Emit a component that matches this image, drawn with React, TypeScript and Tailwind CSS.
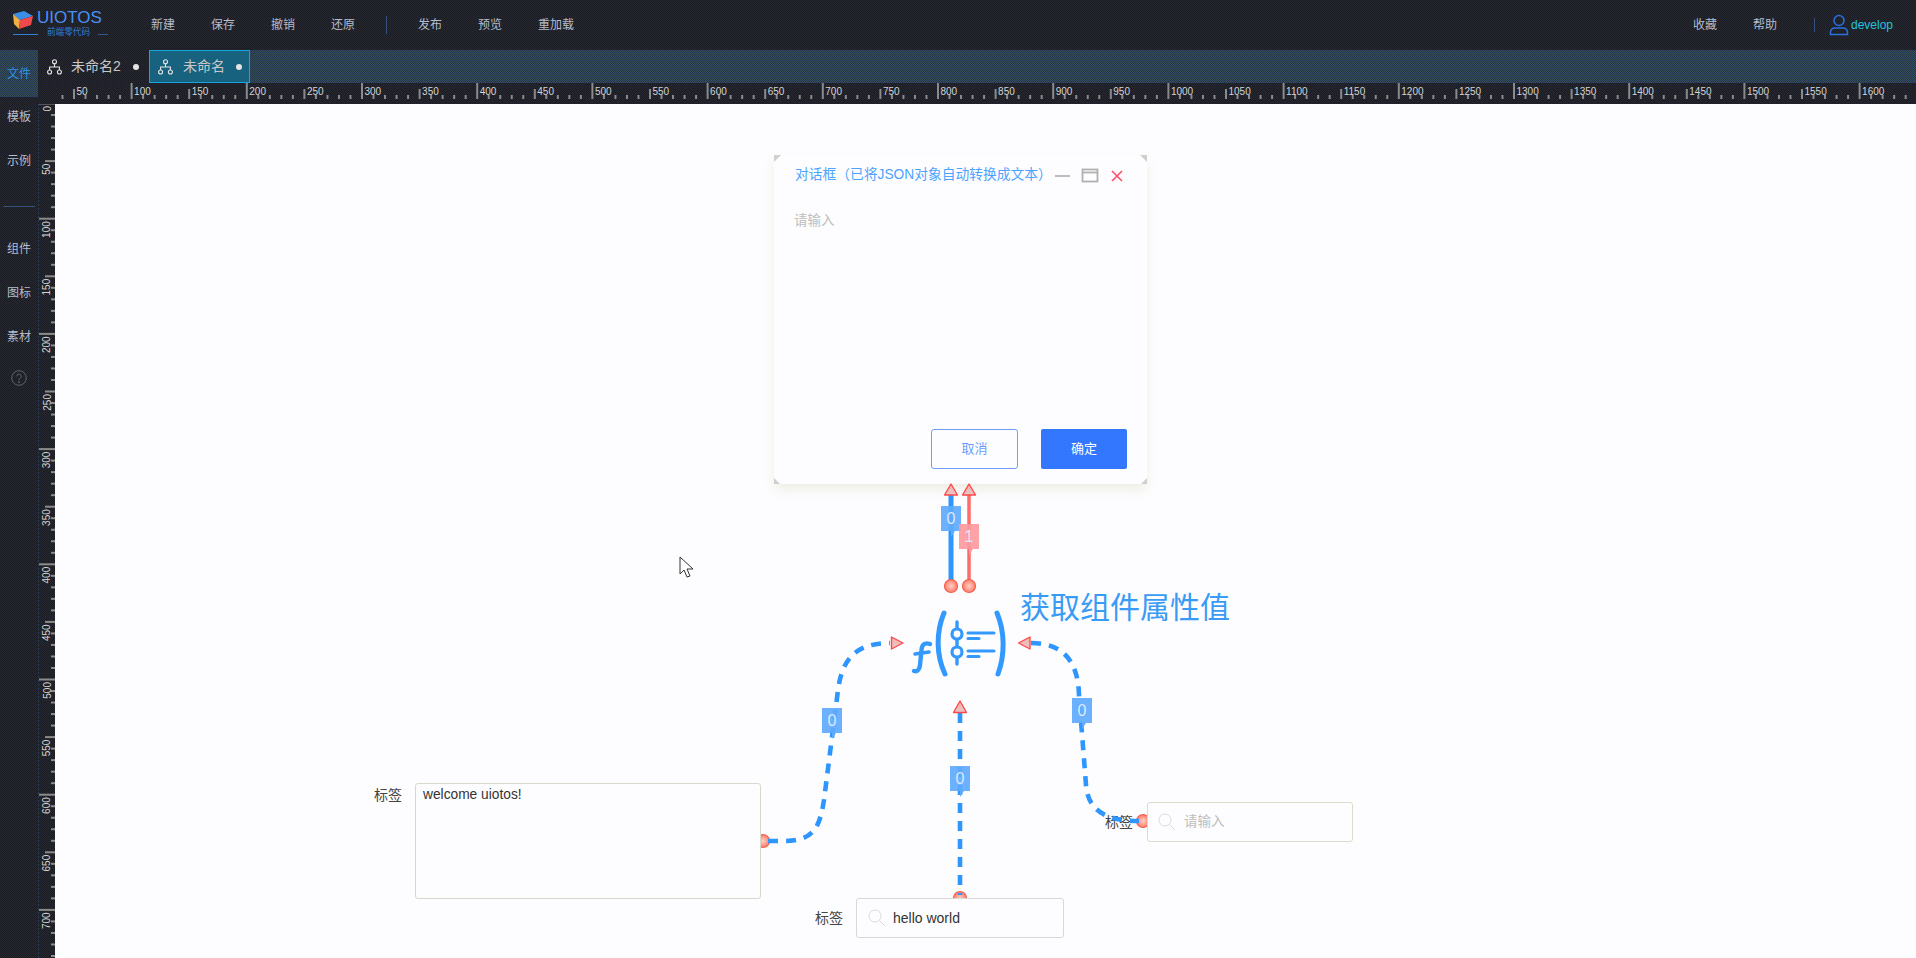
const cjk = "font-['Liberation_Sans','Noto_Sans_CJK_SC',sans-serif]";
// the reference is a dithered gif, so the dark panels carry a 1px checker
const darkBg = 'bg-[repeating-conic-gradient(#26272b_0_25%,#1b1d28_0_50%)] bg-[length:2px_2px]';
const tabBg = 'bg-[repeating-conic-gradient(#35504f_0_25%,#243454_0_50%)] bg-[length:2px_2px]';

function range(from: number, to: number, step: number) {
  const out: number[] = [];
  for (let n = from; n <= to; n += step) out.push(n);
  return out;
}

function Logo() {
  return (
    <div className="relative w-[151px] h-full shrink-0">
      <svg width="110" height="40" viewBox="0 0 110 40" className="absolute left-0 top-0">
        <polygon points="13,14 24,11 33,16 20,20" fill="#3a8ee8" />
        <polygon points="13,14 20,20 19,29 14,24" fill="#efb043" />
        <polygon points="20,20 33,16 31,25 19,29" fill="#f04a4a" />
        <line x1="13" y1="34.5" x2="38" y2="34.5" stroke="#2f7fd8" strokeWidth="1" />
        <line x1="98" y1="34.5" x2="108" y2="34.5" stroke="#2b5a96" strokeWidth="1" />
      </svg>
      <span className="absolute left-[37px] top-[8px] text-[17px] leading-[20px] text-[#4a8ff0]">UIOTOS</span>
      <span className="absolute left-[47px] top-[27px] text-[8.6px] leading-[11px] text-[#2f7fd8] whitespace-nowrap">前端零代码</span>
    </div>
  );
}

function Header() {
  return (
    <div className={`flex items-center h-[50px] shrink-0 ${darkBg} text-[12px] text-[#b4bccc]`}>
      <Logo />
      <div className="flex items-center gap-9">
        <span>新建</span>
        <span>保存</span>
        <span>撤销</span>
        <span>还原</span>
      </div>
      <div className="w-px h-[18px] bg-[#35507c] ml-[31px] mr-[31px]" />
      <div className="flex items-center gap-9">
        <span>发布</span>
        <span>预览</span>
        <span>重加载</span>
      </div>
      <div className="flex items-center ml-auto pr-[23px]">
        <span>收藏</span>
        <span className="ml-9">帮助</span>
        <div className="w-px h-[14px] bg-[#35507c] ml-[37px] mr-[14px]" />
        <svg width="20" height="22" viewBox="0 0 20 22" fill="none" stroke="#2b6fe0" strokeWidth="1.5">
          <circle cx="10" cy="6.5" r="5" />
          <path d="M1.5 20.5 v-2.5 a4.5 4.5 0 0 1 4.5 -4 h8 a4.5 4.5 0 0 1 4.5 4 v2.5 z" />
        </svg>
        <span className="ml-[2px] text-[#22c3dc]">develop</span>
      </div>
    </div>
  );
}

function SideItem({ label }: { label: string }) {
  return <div className="flex items-center justify-center h-[40px]">{label}</div>;
}

function Sidebar() {
  return (
    <div className={`flex flex-col w-[38px] shrink-0 ${darkBg} text-[12px] text-[#b4bccc]`}>
      <div className={`flex items-center justify-center h-[47px] ${tabBg} text-[#2e8fe6]`}>文件</div>
      <SideItem label="模板" />
      <div className="mt-[4px]">
        <SideItem label="示例" />
      </div>
      <div className="h-px mx-[3px] mt-[25px] bg-[#35507c]" />
      <div className="mt-[22px] flex flex-col gap-[4px]">
        <SideItem label="组件" />
        <SideItem label="图标" />
        <SideItem label="素材" />
      </div>
      <div className="flex justify-center mt-[13px]">
        <svg width="16" height="16" viewBox="0 0 16 16" fill="none" stroke="#5f646c" strokeWidth="1">
          <circle cx="8" cy="8" r="7.3" />
          <path d="M5.8 6.3 a2.2 2.2 0 1 1 3.4 1.9 c-.8 .5 -1.2 .9 -1.2 1.9" />
          <circle cx="8" cy="12" r=".5" fill="#5f646c" />
        </svg>
      </div>
    </div>
  );
}

function FlowIcon() {
  return (
    <svg width="15" height="16" viewBox="0 0 15 16" fill="none" stroke="#e4e4e4" strokeWidth="1.1">
      <circle cx="7.5" cy="2.8" r="2" />
      <circle cx="2.6" cy="13" r="2" />
      <circle cx="12.4" cy="13" r="2" />
      <path d="M7.5 4.8 V8 M2.6 11 V8 H12.4 V11" />
    </svg>
  );
}

function TabBar() {
  return (
    <div className={`flex h-[33px] shrink-0 ${tabBg} text-[14px] text-[#c8c8c8]`}>
      <div className={`flex items-center w-[111px] ${darkBg} pl-[9px]`}>
        <FlowIcon />
        <span className="ml-[9px]">未命名2</span>
        <span className="w-[6px] h-[6px] rounded-full bg-[#e4e4e4] ml-[12px]" />
      </div>
      <div className="flex items-center w-[101px] bg-[#17627f] border border-[#18a5dc] pl-[8px]">
        <FlowIcon />
        <span className="ml-[10px]">未命名</span>
        <span className="w-[6px] h-[6px] rounded-full bg-[#e4e4e4] ml-[11px]" />
      </div>
    </div>
  );
}

function TopRuler() {
  return (
    <svg width="1878" height="21" viewBox="38 83 1878 21" className={`block shrink-0 ${darkBg}`}>
      {range(40, 1660, 10).map((n) => {
        const x = 16.4 + n * 1.152;
        const y = n % 100 === 0 ? 83 : n % 50 === 0 ? 89 : 95;
        return <rect key={n} x={x - 1} y={y} width="2" height={99 - y} fill="#8b8b8b" />;
      })}
      {range(50, 1600, 50).map((n) => (
        <text key={n} x={16.4 + n * 1.152 + 2.5} y="94.5" fontSize="10" fill="#d4d4d4" fontFamily="Liberation Sans">
          {n}
        </text>
      ))}
    </svg>
  );
}

function LeftRuler() {
  return (
    <svg width="17" height="854" viewBox="38 104 17 854" className={`block shrink-0 ${darkBg}`}>
      <line x1="38" y1="104" x2="38" y2="958" stroke="#2c4866" strokeWidth="1.5" strokeDasharray="2 2" />
      {range(0, 750, 10).map((n) => {
        const y = 103.5 + n * 1.152;
        const x = n % 100 === 0 ? 39 : n % 50 === 0 ? 45 : 51;
        return <rect key={n} x={x} y={y - 1} width={55 - x} height="2" fill="#8b8b8b" />;
      })}
      {range(0, 700, 50).map((n) => {
        const y = 103.5 + n * 1.152 + 2.5;
        return (
          <text key={n} x="50.5" y={y} fontSize="10" fill="#d4d4d4" fontFamily="Liberation Sans" transform={`rotate(-90 50.5 ${y})`} textAnchor="end">
            {n}
          </text>
        );
      })}
    </svg>
  );
}

function SearchIcon() {
  return (
    <svg width="18" height="18" viewBox="0 0 18 18" fill="none" stroke="#dcdcdc" strokeWidth="1" className="shrink-0">
      <circle cx="7" cy="7" r="6" />
      <line x1="11.5" y1="11.5" x2="17" y2="17" />
    </svg>
  );
}

function Dialog() {
  return (
    <div className="absolute left-[719px] top-[51px] w-[373px] h-[329px] flex flex-col bg-[#fdfdff] rounded-[6px] shadow-[0_6px_12px_rgba(200,200,160,0.28)] pl-[20px] pr-[20px] pb-[15px]">
      <div className="flex items-center h-[40px] shrink-0 pl-px">
        <span className="text-[13.75px] text-[#4da3ff] whitespace-nowrap">对话框（已将JSON对象自动转换成文本）</span>
        <svg width="70" height="16" viewBox="0 0 70 16" fill="none" className="ml-[2px] mt-[2px] shrink-0">
          <line x1="1" y1="8" x2="16" y2="8" stroke="#bcbcc4" strokeWidth="2" />
          <rect x="28.5" y="1.5" width="15" height="12" stroke="#b0b0b0" strokeWidth="1.8" />
          <line x1="28" y1="4.5" x2="44" y2="4.5" stroke="#b0b0b0" strokeWidth="1.8" />
          <path d="M58 3 L68 13 M68 3 L58 13" stroke="#ff4d6a" strokeWidth="1.6" />
        </svg>
      </div>
      <div className="mt-[18px] text-[13.5px] leading-[16px] text-[#bdbdbd]">请输入</div>
      <div className="flex justify-end gap-[23px] mt-auto text-[13px]">
        <div className="flex items-center justify-center w-[87px] h-[40px] rounded-[3px] border border-[#6f9dff] text-[#6f9dff]">取消</div>
        <div className="flex items-center justify-center w-[86px] h-[40px] rounded-[2px] bg-[#3377ff] text-white">确定</div>
      </div>
    </div>
  );
}

function Badge({ x, y, value, fill }: { x: number; y: number; value: string; fill: string }) {
  return (
    <g>
      <rect x={x} y={y} width="20" height="25" fill={fill} opacity="0.92" />
      <polygon points={`${x + 10},${y + 25} ${x + 14},${y + 25} ${x + 10},${y + 31}`} fill={fill} />
      <text x={x + 10} y={y + 18} fontSize="16" fill="#dbe9ff" textAnchor="middle" fontFamily="Liberation Sans">
        {value}
      </text>
    </g>
  );
}

function Arrow({ points }: { points: string }) {
  return <polygon points={points} fill="url(#arrowFill)" stroke="#ff4a4a" strokeWidth="1.4" strokeLinejoin="round" />;
}

function Port({ x, y }: { x: number; y: number }) {
  return <circle cx={x} cy={y} r="6.5" fill="url(#portFill)" stroke="#f2604f" strokeWidth="1.2" />;
}

function FuncIcon() {
  return (
    <g fill="none" stroke="#3399ff" strokeLinecap="round">
      <path d="M930 644 C924 642 922 645 921.5 650 L920 665 C919.5 670 917 672 914 671" strokeWidth="4.4" />
      <line x1="915" y1="654" x2="929" y2="652" strokeWidth="3.6" />
      <path d="M944 613 C936 632 936 655 945 674" strokeWidth="5" />
      <path d="M997 613 C1005 632 1005 655 998 674" strokeWidth="5" />
      <line x1="957" y1="622" x2="957" y2="628" strokeWidth="3.4" />
      <line x1="957" y1="640" x2="957" y2="646" strokeWidth="3.4" />
      <line x1="957" y1="658" x2="957" y2="664" strokeWidth="3.4" />
      <circle cx="957" cy="634" r="5" strokeWidth="3.2" />
      <circle cx="957" cy="652" r="5" strokeWidth="3.2" />
      <line x1="968" y1="633" x2="994" y2="633" strokeWidth="3" />
      <line x1="968" y1="638.5" x2="979" y2="638.5" strokeWidth="3" />
      <line x1="968" y1="651" x2="994" y2="651" strokeWidth="3" />
      <line x1="968" y1="656.5" x2="979" y2="656.5" strokeWidth="3" />
    </g>
  );
}

function PortLayer() {
  return (
    <svg width="1861" height="854" viewBox="55 104 1861 854" className="absolute left-0 top-0">
      <defs>
        <radialGradient id="portFill">
          <stop offset="0%" stopColor="#ffd2c4" />
          <stop offset="100%" stopColor="#ff7a6a" />
        </radialGradient>
      </defs>
      <Port x={763} y={841} />
      <Port x={960} y={898} />
      <Port x={1143} y={821} />
    </svg>
  );
}

function WireLayer() {
  const dash = { fill: 'none', stroke: '#2f96ff', strokeWidth: 4.6, strokeDasharray: '10 8' };
  return (
    <svg width="1861" height="854" viewBox="55 104 1861 854" className="absolute left-0 top-0 pointer-events-none">
      <defs>
        <linearGradient id="arrowFill" x1="0" y1="0" x2="0" y2="1">
          <stop offset="0%" stopColor="#f3b3ac" />
          <stop offset="100%" stopColor="#e9c6c6" />
        </linearGradient>
      </defs>

      <polygon points="774,155 781,155 774,162" fill="#cfcfcf" />
      <polygon points="1147,155 1140,155 1147,162" fill="#cfcfcf" />
      <polygon points="774,484 780,484 774,478" fill="#cfcfcf" />
      <polygon points="1147,484 1141,484 1147,478" fill="#cfcfcf" />

      <line x1="951" y1="494" x2="951" y2="586" stroke="#2f96ff" strokeWidth="5" />
      <line x1="969" y1="494" x2="969" y2="586" stroke="#ff6b6b" strokeWidth="3.5" />
      <Arrow points="951,484 944.5,495 957.5,495" />
      <Arrow points="969,484 962.5,495 975.5,495" />
      <Port x={951} y={586} />
      <Port x={969} y={586} />
      <Badge x={941} y={506} value="0" fill="#5eaaff" />
      <Badge x={959} y={524} value="1" fill="#ff9a9f" />

      <path d="M768 841 L785 841 C815 841 820 825 824 800 L838 690 C842 660 855 643 890 643" {...dash} />
      <path d="M1031 643 C1062 643 1078 660 1079 695 L1086 785 C1088 810 1105 821 1139 821" {...dash} />
      <path d="M960 713 L960 895" {...dash} />

      <Arrow points="903,643 891.5,637 891.5,649" />
      <Arrow points="1018.5,643 1030,637 1030,649" />
      <Arrow points="960,701 953.5,712.5 966.5,712.5" />

      <Badge x={822} y={708} value="0" fill="#5eaaff" />
      <Badge x={1072} y={698} value="0" fill="#5eaaff" />
      <Badge x={950} y={766} value="0" fill="#5eaaff" />

      <FuncIcon />

      <path d="M680 557 L680 574 L684 570 L687 577 L690 576 L687 569 L693 569 Z" fill="#fff" stroke="#333" strokeWidth="1" />
    </svg>
  );
}

function Canvas() {
  return (
    <div className="relative flex-1 overflow-hidden bg-[#fdfdff] text-[14px] text-[#444]">
      <PortLayer />
      <Dialog />

      <div className="absolute left-[965px] top-[486px] text-[30px] leading-[36px] text-[#3a9bf5] whitespace-nowrap">获取组件属性值</div>

      <div className="absolute left-[319px] top-[679px] flex gap-[13px]">
        <span className="mt-[2px] leading-[20px]">标签</span>
        <div className="w-[346px] h-[116px] rounded-[3px] border border-[#d8d8cc] bg-[#fdfdff] pl-[7px] pt-[2px] text-[13.75px] leading-[18px] text-[#333]">welcome uiotos!</div>
      </div>

      <div className="absolute left-[760px] top-[794px] flex items-center gap-[13px]">
        <span>标签</span>
        <div className="flex items-center w-[208px] h-[40px] rounded-[3px] border border-[#d8d8d8] bg-[#fdfdff] pl-[11px]">
          <SearchIcon />
          <span className="ml-[7px] text-[#333]">hello world</span>
        </div>
      </div>

      <div className="absolute left-[1050px] top-[698px] flex items-center gap-[14px]">
        <span>标签</span>
        <div className="flex items-center w-[206px] h-[40px] rounded-[3px] border border-[#dcdccc] bg-[#fdfdff] pl-[10px]">
          <SearchIcon />
          <span className="ml-[8px] text-[13.5px] text-[#bdbdbd]">请输入</span>
        </div>
      </div>

      <WireLayer />
    </div>
  );
}

export default function App() {
  return (
    <div className={`flex flex-col w-[1916px] h-[958px] overflow-hidden ${cjk}`}>
      <Header />
      <div className="flex flex-1 min-h-0">
        <Sidebar />
        <div className="flex flex-col flex-1 min-w-0">
          <TabBar />
          <TopRuler />
          <div className="flex flex-1 min-h-0">
            <LeftRuler />
            <Canvas />
          </div>
        </div>
      </div>
    </div>
  );
}
